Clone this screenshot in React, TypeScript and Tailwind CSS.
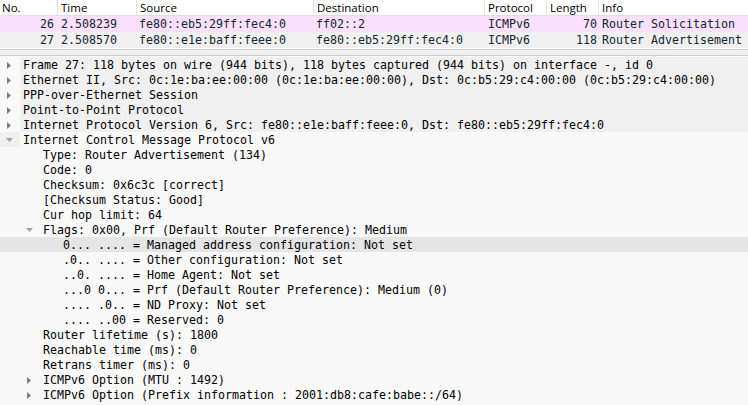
import React from "react";

type Row = {
  level: 0 | 1 | 2;
  arrow?: "right" | "down";
  text: string;
  sel?: boolean;
  hover?: boolean;
};

const packets = [
  { no: "26", time: "2.508239", src: "fe80::eb5:29ff:fec4:0", dst: "ff02::2", proto: "ICMPv6", len: "70", info: "Router Solicitation", bg: "bg-[#fce0ff]" },
  { no: "27", time: "2.508570", src: "fe80::e1e:baff:feee:0", dst: "fe80::eb5:29ff:fec4:0", proto: "ICMPv6", len: "118", info: "Router Advertisement", bg: "bg-[#f0f0f0]" },
];

const tree: Row[] = [
  { level: 0, arrow: "right", text: "Frame 27: 118 bytes on wire (944 bits), 118 bytes captured (944 bits) on interface -, id 0" },
  { level: 0, arrow: "right", text: "Ethernet II, Src: 0c:1e:ba:ee:00:00 (0c:1e:ba:ee:00:00), Dst: 0c:b5:29:c4:00:00 (0c:b5:29:c4:00:00)" },
  { level: 0, arrow: "right", text: "PPP-over-Ethernet Session" },
  { level: 0, arrow: "right", text: "Point-to-Point Protocol" },
  { level: 0, arrow: "right", text: "Internet Protocol Version 6, Src: fe80::e1e:baff:feee:0, Dst: fe80::eb5:29ff:fec4:0" },
  { level: 0, arrow: "down", text: "Internet Control Message Protocol v6", sel: true },
  { level: 1, text: "Type: Router Advertisement (134)" },
  { level: 1, text: "Code: 0" },
  { level: 1, text: "Checksum: 0x6c3c [correct]" },
  { level: 1, text: "[Checksum Status: Good]" },
  { level: 1, text: "Cur hop limit: 64" },
  { level: 1, arrow: "down", text: "Flags: 0x00, Prf (Default Router Preference): Medium" },
  { level: 2, text: "0... .... = Managed address configuration: Not set", hover: true },
  { level: 2, text: ".0.. .... = Other configuration: Not set" },
  { level: 2, text: "..0. .... = Home Agent: Not set" },
  { level: 2, text: "...0 0... = Prf (Default Router Preference): Medium (0)" },
  { level: 2, text: ".... .0.. = ND Proxy: Not set" },
  { level: 2, text: ".... ..00 = Reserved: 0" },
  { level: 1, text: "Router lifetime (s): 1800" },
  { level: 1, text: "Reachable time (ms): 0" },
  { level: 1, text: "Retrans timer (ms): 0" },
  { level: 1, arrow: "right", text: "ICMPv6 Option (MTU : 1492)" },
  { level: 1, arrow: "right", text: "ICMPv6 Option (Prefix information : 2001:db8:cafe:babe::/64)" },
];

const indent = ["pl-0", "pl-[20px]", "pl-[40px]"];

const cols = [
  { label: "No.", w: "w-[57px]" },
  { label: "Time", w: "w-[79px]" },
  { label: "Source", w: "w-[177px]" },
  { label: "Destination", w: "w-[171px]" },
  { label: "Protocol", w: "w-[62px]" },
  { label: "Length", w: "w-[52px]" },
  { label: "Info", w: "flex-1" },
];

const mono = "font-['DejaVu_Sans_Mono',monospace] text-[11.63px] leading-none whitespace-pre";

function Arrow({ dir }: { dir: "right" | "down" }) {
  if (dir === "right") {
    return (
      <svg width="4" height="7" viewBox="0 0 4 7" className="ml-[7px] mt-[1px]">
        <polygon points="0,0 4,3.5 0,7" fill="#7c7c7c" />
      </svg>
    );
  }
  return (
    <svg width="7" height="4" viewBox="0 0 7 4" className="ml-[6px] mt-[1px]">
      <polygon points="0,0 7,0 3.5,4" fill="#a2a2a2" />
    </svg>
  );
}

export default function App() {
  return (
    <div className="w-[748px] h-[405px] overflow-hidden bg-[#f0f0f0] flex flex-col">
      {/* packet list */}
      <div className="h-[50px] shrink-0 bg-white border-b border-[#cdcdcd]">
        <div className="h-[16px] flex border-b border-[#dedede] font-['Open_Sans',sans-serif] text-[11.5px] text-black leading-none">
          {cols.map((c, i) => (
            <div
              key={c.label}
              className={`${c.w} h-full flex items-center ${i === 0 ? "pl-[2px]" : "pl-[3px] border-l border-[#e3e3e3]"}`}
            >
              {c.label}
            </div>
          ))}
        </div>
        {packets.map((p) => (
          <div key={p.no} className={`h-[16px] flex items-center pt-[2px] text-[#12272e] ${p.bg} ${mono}`}>
            <div className="w-[57px] text-right pr-[3px]">{p.no}</div>
            <div className="w-[79px] pl-[4px]">{p.time}</div>
            <div className="w-[177px] pl-[3px]">{p.src}</div>
            <div className="w-[171px] pl-[3px]">{p.dst}</div>
            <div className="w-[62px] pl-[4px]">{p.proto}</div>
            <div className="w-[52px] text-right pr-[1px]">{p.len}</div>
            <div className="flex-1 pl-[4px]">{p.info}</div>
          </div>
        ))}
      </div>

      {/* splitter */}
      <div className="h-[5px] shrink-0 bg-[#f0f0f0]" />

      {/* packet details */}
      <div className="flex-1 border-t border-[#cdcdcd] pt-[1px] bg-[#f9f9f9]">
        {tree.map((r, i) => {
          const top = r.level === 0;
          const rowBg = r.hover ? "bg-[#e5e5e5]" : "";
          const boxBg = top && r.sel ? "bg-[#f0f0f0]" : "";
          const textBg = top && !r.sel ? "bg-[#f0f0f0]" : "";
          return (
            <div key={i} className={`h-[15px] flex ${indent[r.level]} ${rowBg}`}>
              <div className={`w-[20px] h-full shrink-0 flex items-center ${boxBg}`}>
                {r.arrow && <Arrow dir={r.arrow} />}
              </div>
              <div className={`flex-1 h-full flex items-center pl-[3px] pt-[2px] ${textBg}`}>
                <span className={`${mono} text-black`}>{r.text}</span>
              </div>
            </div>
          );
        })}
      </div>
    </div>
  );
}
